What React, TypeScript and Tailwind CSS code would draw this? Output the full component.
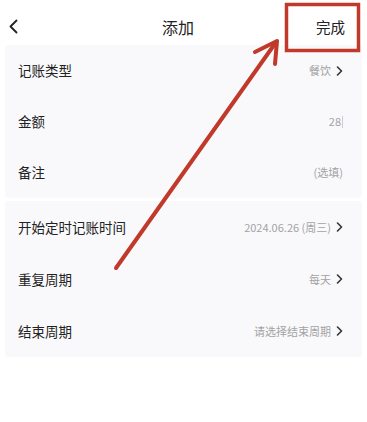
import React from "react";

const Chevron = () => (
  <svg width="7" height="10" viewBox="0 0 7 10" className="ml-[5px]">
    <path d="M1.5 1 L5.5 5 L1.5 9" fill="none" stroke="#333" strokeWidth="1.6" strokeLinecap="round" strokeLinejoin="round" />
  </svg>
);

type Row = { label: string; value: string; chevron?: boolean; cursor?: boolean };

const RowItem = ({ r, tall }: { r: Row; tall?: boolean }) => (
  <div className={`flex items-center justify-between pl-[13px] pr-[19px] ${tall ? "h-[52px]" : "h-[51px]"}`}>
    <span className="text-[13.5px] text-[#222]">{r.label}</span>
    <div className="flex items-center">
      <span className="text-[11px] text-[#a3a3a3]">{r.value}</span>
      {r.cursor && <span className="ml-[1px] inline-block h-[12px] w-[1px] bg-[#ccc]" />}
      {r.chevron && <Chevron />}
    </div>
  </div>
);

export default function App() {
  const card1: Row[] = [
    { label: "记账类型", value: "餐饮", chevron: true },
    { label: "金额", value: "28", cursor: true },
    { label: "备注", value: "(选填)" },
  ];
  const card2: Row[] = [
    { label: "开始定时记账时间", value: "2024.06.26 (周三)", chevron: true },
    { label: "重复周期", value: "每天", chevron: true },
    { label: "结束周期", value: "请选择结束周期", chevron: true },
  ];
  return (
    <div
      className="relative h-[422px] w-[367px] overflow-hidden bg-white"
      style={{ fontFamily: '"Noto Sans CJK SC", "Noto Sans", sans-serif' }}
    >
      <div className="flex h-[45px] items-center justify-between pl-[9px] pr-[22px] pt-[8px]">
        <svg width="9" height="15" viewBox="0 0 9 15">
          <path d="M7.5 1.5 L1.5 7.5 L7.5 13.5" fill="none" stroke="#222" strokeWidth="1.8" strokeLinecap="round" strokeLinejoin="round" />
        </svg>
        <span className="ml-[22px] text-[16px] text-[#222]">添加</span>
        <span className="text-[14.5px] text-[#222]">完成</span>
      </div>
      <div className="mx-[5px] flex flex-col gap-[3px]">
        <div className="rounded-[4px] bg-[#f9f9fb]">
          {card1.map((r) => (
            <RowItem key={r.label} r={r} />
          ))}
        </div>
        <div className="rounded-[4px] bg-[#f9f9fb]">
          {card2.map((r) => (
            <RowItem key={r.label} r={r} tall />
          ))}
        </div>
      </div>
      <svg className="pointer-events-none absolute left-0 top-0" width="367" height="422" viewBox="0 0 367 422">
        <rect x="286.5" y="4.5" width="72" height="46" fill="none" stroke="#c0392b" strokeWidth="3.5" />
        <line x1="116" y1="268" x2="274" y2="45" stroke="#c0392b" strokeWidth="4" strokeLinecap="round" />
        <polyline points="255,52 277,41 275,64" fill="none" stroke="#c0392b" strokeWidth="4" strokeLinecap="round" strokeLinejoin="round" />
      </svg>
    </div>
  );
}
